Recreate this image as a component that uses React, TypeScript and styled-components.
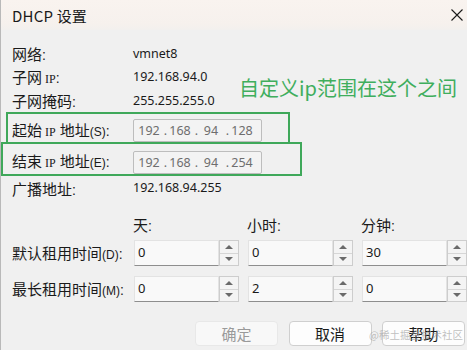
import { Fragment } from 'react';
import styled, { createGlobalStyle } from 'styled-components';

const GlobalStyle = createGlobalStyle`
  html, body {
    margin: 0;
    padding: 0;
    background: #f0f0f0;
  }
  body {
    font-family: "Noto Sans CJK SC", "Noto Sans", sans-serif;
    color: #1a1a1a;
  }
`

const Dialog = styled.div`
  position: relative;
  width: 467px;
  height: 350px;
  overflow: hidden;
  background: #f0f0f0;
  border-left: 1px solid #b9b9b9;
  box-sizing: border-box;
`

const TitleBar = styled.div`
  height: 30px;
  display: flex;
  align-items: center;
  justify-content: space-between;
  padding: 0 4px 0 11px;
  background: linear-gradient(#f9f3ef, #f6f1ed 80%, #f2f0ee);
`

const Title = styled.span`
  font-size: 15px;
  line-height: 1;
  letter-spacing: 0.2px;
`

const Body = styled.div`
  padding: 13px 0 0 11px;
`

const Row = styled.div<{ $h: number }>`
  display: flex;
  align-items: center;
  height: ${p => p.$h}px;
`

const Label = styled.span`
  width: 121px;
  flex: none;
  font-size: 15px;
  line-height: 1;
  white-space: nowrap;
`

// "IP" is set in a small serif, like the dialog's fallback font
const IpWord = styled.span<{ $r?: number }>`
  font-family: "Liberation Serif", serif;
  font-size: 12px;
  margin: 0 ${p => p.$r ?? 0}px 0 3px;
`

const Key = styled.span`
  font-family: "Liberation Sans", sans-serif;
  font-size: 12px;
`

const Colon = styled.span`
  font-family: "Liberation Sans", sans-serif;
  font-size: 14px;
`

const Value = styled.span`
  font-family: "Noto Sans", sans-serif;
  font-size: 12.5px;
  line-height: 1;
`

const IpBox = styled.div`
  width: 129px;
  height: 23px;
  box-sizing: border-box;
  border: 1px solid #bdbdbd;
  border-radius: 2px;
  background: #f3f3f3;
  display: flex;
  align-items: center;
  padding-left: 2px;
  font-family: "Noto Sans", sans-serif;
  font-size: 12.5px;
  color: #6e6e6e;
  margin-top: 2px;
`

const IpPart = styled.span`
  width: 26px;
  text-align: center;
`

const IpDot = styled.span`
  width: 5px;
  text-align: right;
`

const SpinGrid = styled.div<{ $gap: number; $h?: number }>`
  display: grid;
  grid-template-columns: 113px 105px 105px 105px;
  column-gap: 9px;
  align-items: center;
  margin-top: ${p => p.$gap}px;
  ${p => p.$h ? `height: ${p.$h}px;` : ''}
`

const ColHead = styled.span`
  font-size: 15px;
  line-height: 1;
  margin-left: -1px;
`

const Spinner = styled.div`
  display: flex;
  height: 26px;
`

const SpinField = styled.div`
  flex: 1;
  box-sizing: border-box;
  background: #f9f9f9;
  border: 1px solid #e3e3e3;
  border-bottom: 1px solid #8e8e8e;
  padding: 3px 0 0 3px;
  font-family: "Noto Sans", sans-serif;
  font-size: 13px;
  line-height: 16px;
`

const SpinButtons = styled.div`
  width: 20px;
  flex: none;
  display: flex;
  flex-direction: column;
  box-sizing: border-box;
  border: 1px solid #cdcdcd;
  background: #f4f4f4;
`

const SpinBtn = styled.div<{ $down?: boolean }>`
  flex: 1;
  display: flex;
  align-items: center;
  justify-content: center;
  border-top: ${p => p.$down ? '1px solid #d6d6d6' : 'none'};
  &::after {
    content: '';
    border-left: 4px solid transparent;
    border-right: 4px solid transparent;
    ${p => p.$down ? 'border-top: 4px solid #6a6a6a;' : 'border-bottom: 4px solid #6a6a6a;'}
  }
`

const Buttons = styled.div`
  display: flex;
  justify-content: flex-end;
  gap: 10.5px;
  padding-right: 2px;
  margin-top: 19px;
`

const Button = styled.div<{ $disabled?: boolean }>`
  width: 83px;
  height: 25px;
  box-sizing: border-box;
  border-radius: 4px;
  display: flex;
  align-items: center;
  justify-content: center;
  font-size: 15px;
  background: ${p => p.$disabled ? '#f8f8f8' : '#fdfdfd'};
  border: 1px solid ${p => p.$disabled ? '#e8e8e8' : '#cfcfcf'};
  color: ${p => p.$disabled ? '#9a9a9a' : '#1a1a1a'};
`

const Highlight = styled.div<{ $left: number; $top: number; $w: number; $h: number }>`
  position: absolute;
  left: ${p => p.$left}px;
  top: ${p => p.$top}px;
  width: ${p => p.$w}px;
  height: ${p => p.$h}px;
  box-sizing: border-box;
  border: 2px solid #3fa85a;
  pointer-events: none;
`

const Note = styled.div`
  position: absolute;
  left: 238px;
  top: 78px;
  font-size: 20px;
  line-height: 1;
  color: #3fae5d;
  white-space: nowrap;
`

const Watermark = styled.div`
  position: absolute;
  left: 368px;
  top: 327px;
  font-size: 10.5px;
  color: rgba(150, 150, 150, 0.6);
  white-space: nowrap;
`

function CloseIcon() {
  return (
    <svg width="12" height="12" viewBox="0 0 12 12">
      <path d="M0.5 0.5 L11.5 11.5 M11.5 0.5 L0.5 11.5" stroke="#1a1a1a" strokeWidth="1.1" />
    </svg>
  )
}

function IpInput({ value }: { value: string }) {
  const parts = value.split('.');
  return (
    <IpBox>
      {parts.map((p, i) => (
        <Fragment key={i}>
          <IpPart>{p}</IpPart>
          {i < 3 && <IpDot>.</IpDot>}
        </Fragment>
      ))}
    </IpBox>
  )
}

function Spin({ value }: { value: string }) {
  return (
    <Spinner>
      <SpinField>{value}</SpinField>
      <SpinButtons>
        <SpinBtn />
        <SpinBtn $down />
      </SpinButtons>
    </Spinner>
  )
}

export default function App() {
  return (
    <Dialog>
      <GlobalStyle />
      <TitleBar>
        <Title>DHCP 设置</Title>
        <CloseIcon />
      </TitleBar>
      <Body>
        <Row $h={22}>
          <Label>网络<Colon>:</Colon></Label>
          <Value>vmnet8</Value>
        </Row>
        <Row $h={24}>
          <Label>子网<IpWord>IP</IpWord><Colon>:</Colon></Label>
          <Value>192.168.94.0</Value>
        </Row>
        <Row $h={24}>
          <Label>子网掩码<Colon>:</Colon></Label>
          <Value>255.255.255.0</Value>
        </Row>
        <Row $h={33}>
          <Label>起始<IpWord $r={4}>IP</IpWord>地址<Key>(S)</Key><Colon>:</Colon></Label>
          <IpInput value="192.168.94.128" />
        </Row>
        <Row $h={30}>
          <Label>结束<IpWord $r={4}>IP</IpWord>地址<Key>(E)</Key><Colon>:</Colon></Label>
          <IpInput value="192.168.94.254" />
        </Row>
        <Row $h={25}>
          <Label>广播地址<Colon>:</Colon></Label>
          <Value>192.168.94.255</Value>
        </Row>
        <SpinGrid $gap={12} $h={23}>
          <span />
          <ColHead>天<Colon>:</Colon></ColHead>
          <ColHead>小时<Colon>:</Colon></ColHead>
          <ColHead>分钟<Colon>:</Colon></ColHead>
        </SpinGrid>
        <SpinGrid $gap={4}>
          <Label>默认租用时间<Key>(D)</Key><Colon>:</Colon></Label>
          <Spin value="0" />
          <Spin value="0" />
          <Spin value="30" />
        </SpinGrid>
        <SpinGrid $gap={10}>
          <Label>最长租用时间<Key>(M)</Key><Colon>:</Colon></Label>
          <Spin value="0" />
          <Spin value="2" />
          <Spin value="0" />
        </SpinGrid>
        <Buttons>
          <Button $disabled>确定</Button>
          <Button>取消</Button>
          <Button>帮助</Button>
        </Buttons>
      </Body>
      <Highlight $left={5} $top={112} $w={284} $h={32} />
      <Highlight $left={0} $top={142} $w={301} $h={34} />
      <Note>自定义ip范围在这个之间</Note>
      <Watermark>@稀土掘金技术社区</Watermark>
    </Dialog>
  )
}
